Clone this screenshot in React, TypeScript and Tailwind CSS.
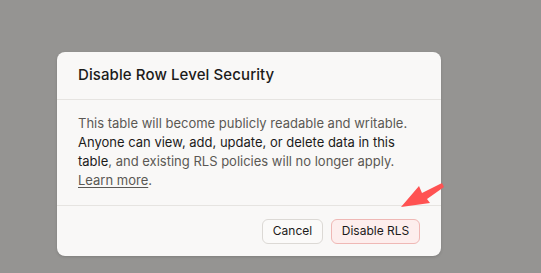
export default function App() {
  return (
    <div className="relative h-[273px] w-[541px] overflow-hidden bg-[#959492] font-['Inter',sans-serif]">
      <div className="absolute left-[57px] top-[52px] w-[384px] rounded-lg bg-[#f9f8f7] shadow-[0_1px_3px_rgba(0,0,0,0.15)]">
        <div className="flex h-[48px] items-center border-b border-[#e6e4e1] px-[21px]">
          <h2 className="text-[15px] font-medium tracking-[0.1px] text-[#1c1b1a]">Disable Row Level Security</h2>
        </div>
        <div className="h-[105px] px-[21px] pt-[14px] text-[13px] leading-[19px] text-[#5b5854]">
          <p>
            This table will become publicly readable and writable.{' '}
            <span className="text-[#1c1b1a]">Anyone can view, add, update, or delete data in this table</span>, and existing RLS
            policies will no longer apply.{' '}
            <a className="underline underline-offset-2 decoration-[#5b5854]">Learn more</a>.
          </p>
        </div>
        <div className="flex h-[51px] items-center justify-end gap-2 border-t border-[#e6e4e1] px-[21px]">
          <button className="h-[25px] w-[61px] rounded-md border border-[#dcd9d5] bg-[#fbfaf9] text-[12px] text-[#1c1b1a]">
            Cancel
          </button>
          <button className="h-[25px] w-[89px] rounded-md border border-[#efb8b5] bg-[#fdeeed] text-[12px] text-[#1c1b1a]">
            Disable RLS
          </button>
        </div>
      </div>
      <svg className="absolute left-[390px] top-[176px]" width="60" height="36" viewBox="0 0 60 36">
        <path d="M11 31 L29 10 L32 17 L52 7 L54 11 L37 23 L40 27 Z" fill="#ff5252" />
      </svg>
    </div>
  )
}
